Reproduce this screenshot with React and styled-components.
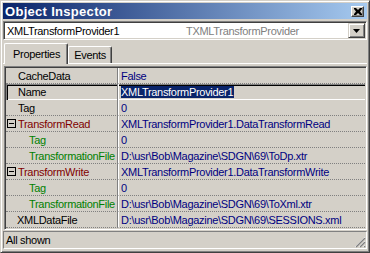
import React from 'react'
import styled, { createGlobalStyle } from 'styled-components'

const GlobalStyle = createGlobalStyle`
  html, body { margin: 0; padding: 0; background: #D4D0C8; }
  body {
    font-family: "Liberation Sans", Arial, sans-serif;
    font-size: 11px;
    letter-spacing: -0.3px;
  }
`

const Window = styled.div`
  box-sizing: border-box;
  width: 370px;
  height: 253px;
  background: #D4D0C8;
  border: 1px solid;
  border-color: #D4D0C8 #404040 #404040 #D4D0C8;
  box-shadow: inset 1px 1px #fff, inset -1px -1px #808080;
  padding: 2px;
  display: flex;
  flex-direction: column;
`

const TitleBar = styled.div`
  height: 16px;
  margin-bottom: 2px;
  display: flex;
  align-items: center;
  justify-content: space-between;
  padding: 0 3px 0 2px;
  background: linear-gradient(to right, #0A246A, #A6CAF0);
`

const Title = styled.span`
  color: #fff;
  font-weight: bold;
  font-size: 13px;
  letter-spacing: 0.3px;
`

const CaptionButton = styled.div`
  box-sizing: border-box;
  width: 13px;
  height: 11px;
  background: #D4D0C8;
  border: 1px solid;
  border-color: #fff #404040 #404040 #fff;
  box-shadow: inset -1px -1px #808080;
  display: flex;
  align-items: center;
  justify-content: center;
`

const Combo = styled.div`
  box-sizing: border-box;
  height: 19px;
  margin-bottom: 2px;
  background: #fff;
  border: 1px solid;
  border-color: #808080 #fff #fff #808080;
  box-shadow: inset 1px 1px #404040, inset -1px -1px #D4D0C8;
  padding: 1px;
  display: flex;
  align-items: center;
`

const ComboName = styled.span`
  width: 179px;
  padding-left: 2px;
  color: #000;
`

const ComboType = styled.span`
  flex: 1;
  color: #808080;
`

const DropButton = styled.div`
  box-sizing: border-box;
  width: 17px;
  height: 15px;
  background: #D4D0C8;
  border: 1px solid;
  border-color: #D4D0C8 #404040 #404040 #D4D0C8;
  box-shadow: inset 1px 1px #fff, inset -1px -1px #808080;
  display: flex;
  align-items: center;
  justify-content: center;
`

const TabRow = styled.div`
  height: 21px;
  display: flex;
  align-items: flex-end;
  padding-left: 1px;
  position: relative;
  z-index: 1;
`

const Tab = styled.div`
  box-sizing: border-box;
  height: ${p => (p.$active ? '21px' : '17px')};
  margin-bottom: ${p => (p.$active ? '-1px' : '0')};
  padding: ${p => (p.$active ? '0 7px 0 8px' : '0 5px 0 5px')};
  background: #D4D0C8;
  border-left: 1px solid #fff;
  border-top: 1px solid #fff;
  border-right: 1px solid #404040;
  box-shadow: inset -1px 0 #808080;
  border-radius: 2px 2px 0 0;
  display: flex;
  align-items: center;
  color: #000;
`

const Page = styled.div`
  border-top: 1px solid #fff;
  padding-top: 2px;
  padding-left: 1px;
`

const Grid = styled.div`
  box-sizing: border-box;
  height: 164px;
  border: 1px solid;
  border-color: #808080 #fff #fff #808080;
  box-shadow: inset 1px 1px #404040, inset -1px -1px #D4D0C8;
  padding: 1px;
  background: #D4D0C8;
`

const Row = styled.div`
  box-sizing: border-box;
  height: 16px;
  display: grid;
  grid-template-columns: 112px 1fr;
  box-shadow: ${p =>
    p.$selected
      ? 'inset 0 1px #808080, inset 1px 0 #808080, inset 0 2px #000, inset 2px 0 #000, inset 0 -1px #fff'
      : 'none'};
`

const NameCell = styled.div`
  box-sizing: border-box;
  display: flex;
  align-items: center;
  padding-left: ${p => p.$indent}px;
  border-right: 1px solid #808080;
  border-bottom: ${p => (p.$selected ? 'none' : '1px dotted #808080')};
  color: ${p => p.$color};
  white-space: nowrap;
  overflow: hidden;
`

const ValueCell = styled.div`
  box-sizing: border-box;
  display: flex;
  align-items: center;
  padding-left: 2px;
  border-left: 1px solid #fff;
  border-bottom: ${p => (p.$selected ? 'none' : '1px dotted #808080')};
  color: #000080;
  white-space: nowrap;
  overflow: hidden;
`

const Selected = styled.span`
  background: #0A246A;
  color: #fff;
  line-height: 12px;
  padding-right: 1px;
`

const Toggle = styled.span`
  box-sizing: border-box;
  width: 9px;
  height: 9px;
  margin-right: 2px;
  border: 1px solid #000;
  background: #D4D0C8;
  display: flex;
  align-items: center;
  justify-content: center;
  &::after {
    content: '';
    width: 5px;
    height: 1px;
    background: #000;
  }
`

const StatusBar = styled.div`
  box-sizing: border-box;
  height: 18px;
  margin-top: 1px;
  border: 1px solid;
  border-color: #808080 #fff #fff #808080;
  display: flex;
  align-items: center;
  justify-content: space-between;
  padding-left: 2px;
  color: #000;
`

const Grip = styled.svg`
  align-self: flex-end;
`

const NAME = '#000'
const GROUP = '#800000'
const SUB = '#008000'

const rows = [
  { name: 'CacheData', value: 'False', color: NAME, indent: 12 },
  { name: 'Name', value: 'XMLTransformProvider1', color: NAME, indent: 12, selected: true },
  { name: 'Tag', value: '0', color: NAME, indent: 12 },
  { name: 'TransformRead', value: 'XMLTransformProvider1.DataTransformRead', color: GROUP, indent: 1, group: true },
  { name: 'Tag', value: '0', color: SUB, indent: 23 },
  { name: 'TransformationFile', value: 'D:\\usr\\Bob\\Magazine\\SDGN\\69\\ToDp.xtr', color: SUB, indent: 23 },
  { name: 'TransformWrite', value: 'XMLTransformProvider1.DataTransformWrite', color: GROUP, indent: 1, group: true },
  { name: 'Tag', value: '0', color: SUB, indent: 23 },
  { name: 'TransformationFile', value: 'D:\\usr\\Bob\\Magazine\\SDGN\\69\\ToXml.xtr', color: SUB, indent: 23 },
  { name: 'XMLDataFile', value: 'D:\\usr\\Bob\\Magazine\\SDGN\\69\\SESSIONS.xml', color: NAME, indent: 11 },
]

const App = () => {
  return (
    <Window>
      <GlobalStyle />
      <TitleBar>
        <Title>Object Inspector</Title>
        <CaptionButton>
          <svg width="8" height="7" viewBox="0 0 8 7">
            <path d="M0 0h2l2 2 2-2h2v1L6 3.5 8 6v1H6L4 5 2 7H0V6l2-2.5L0 1z" fill="#000" />
          </svg>
        </CaptionButton>
      </TitleBar>
      <Combo>
        <ComboName>XMLTransformProvider1</ComboName>
        <ComboType>TXMLTransformProvider</ComboType>
        <DropButton>
          <svg width="7" height="4" viewBox="0 0 7 4">
            <path d="M0 0h7L3.5 4z" fill="#000" />
          </svg>
        </DropButton>
      </Combo>
      <TabRow>
        <Tab $active>Properties</Tab>
        <Tab>Events</Tab>
      </TabRow>
      <Page>
        <Grid>
          {rows.map((r, i) => (
            <Row key={i} $selected={r.selected}>
              <NameCell $indent={r.indent} $color={r.color} $selected={r.selected}>
                {r.group && <Toggle />}
                {r.name}
              </NameCell>
              <ValueCell $selected={r.selected}>
                {r.selected ? <Selected>{r.value}</Selected> : r.value}
              </ValueCell>
            </Row>
          ))}
        </Grid>
      </Page>
      <StatusBar>
        All shown
        <Grip width="12" height="12" viewBox="0 0 12 12">
          <path d="M11 1L1 11M11 5L5 11M11 9L9 11" stroke="#fff" strokeWidth="1" />
          <path d="M11 2L2 11M11 6L6 11M11 10L10 11" stroke="#808080" strokeWidth="1.4" />
        </Grip>
      </StatusBar>
    </Window>
  )
}

export default App
